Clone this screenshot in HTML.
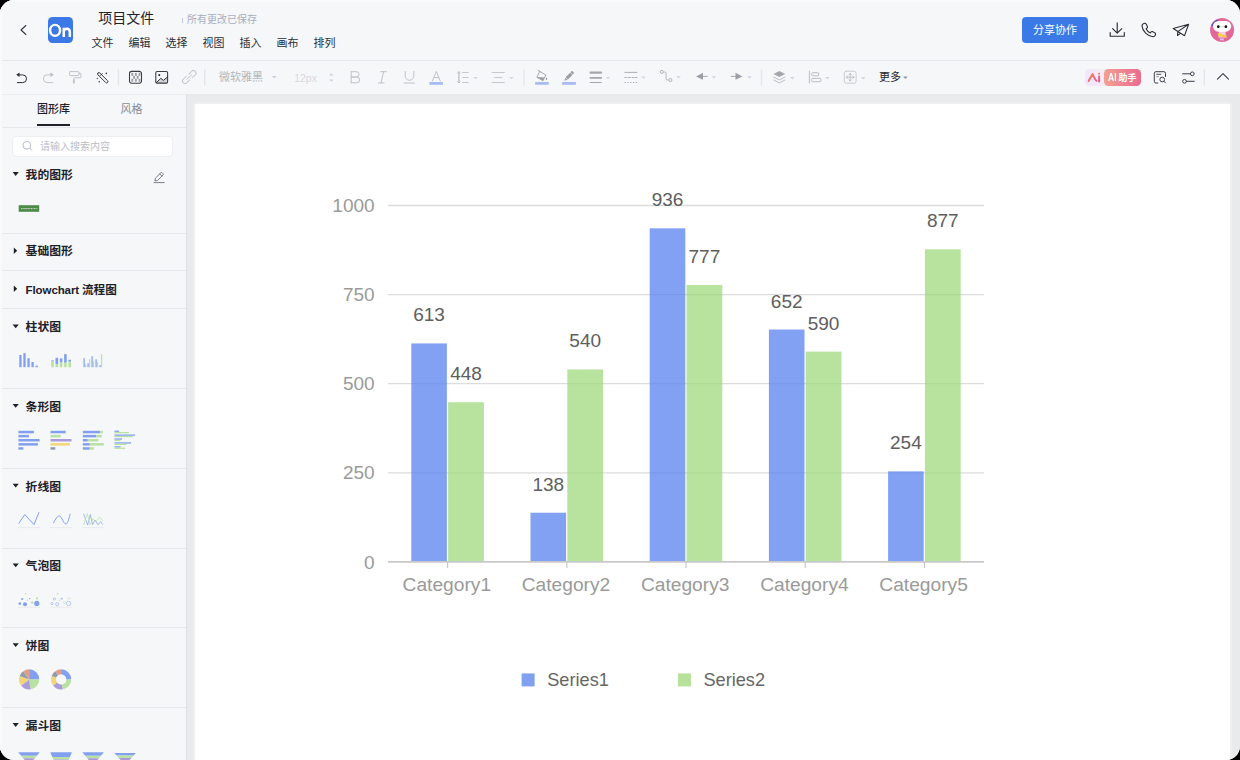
<!DOCTYPE html>
<html lang="zh-CN"><head><meta charset="utf-8"><title>项目文件</title>
<style>
html,body{margin:0;padding:0;background:#000;}
body{width:1240px;height:760px;overflow:hidden;font-family:"Liberation Sans","Noto Sans CJK SC",sans-serif;}
.app{position:relative;width:1240px;height:760px;border-radius:14px;overflow:hidden;background:#f6f7f9;}
.header{position:absolute;left:0;top:0;width:1240px;height:60px;background:#f6f7f9;border-bottom:1px solid #e6e8eb;box-sizing:content-box;}
.toolbar{position:absolute;left:0;top:61px;width:1240px;height:33px;background:#f6f7f9;}
.canvas{position:absolute;left:186px;top:94px;width:1054px;height:666px;background:#e9eaec;}
.page{position:absolute;left:9px;top:10px;width:1035px;height:660px;background:#fff;box-shadow:0 0 3px 1px rgba(255,255,255,0.5);}
.sidebar{position:absolute;left:0;top:94px;width:187px;height:666px;background:#f6f7f9;border-right:1px solid #dedfe2;box-sizing:border-box;}
.ov{position:absolute;left:0;top:0;pointer-events:none;}
.t{position:absolute;white-space:nowrap;line-height:1;font-family:"Liberation Sans","Noto Sans CJK SC",sans-serif;}
.labels .t{z-index:2;}
.sep{position:absolute;left:0;width:186px;height:1px;background:#e6e8eb;}
.logo{position:absolute;left:47.5px;top:17.3px;width:25.2px;height:25.3px;border-radius:4.5px;background:#3a79e6;}
.logo span{color:transparent !important;position:absolute;left:2px;top:4.2px;font-size:18.5px;font-weight:bold;color:#fff;letter-spacing:-1.2px;line-height:1;}
.sharebtn{position:absolute;left:1022.3px;top:17.3px;width:65.4px;height:25.3px;border-radius:4px;background:#3b7ae6;}
.savebar{position:absolute;left:182px;top:17.5px;width:1px;height:5.5px;background:#c3c8d4;}
.aibadge{position:absolute;left:1085px;top:68.8px;width:55.6px;height:17px;border-radius:4.5px;background:linear-gradient(60deg,#efe4fb,#fdf1f3 70%);}
.aibadge-r{position:absolute;left:18.6px;top:0;width:37px;height:17px;border-radius:4.5px;background:linear-gradient(90deg,#f2a08f,#ec6a93);}
.tabline{position:absolute;left:37px;top:30px;width:33px;height:2px;background:#1d2129;}
.search{position:absolute;left:12px;top:42px;width:160.5px;height:20.5px;box-sizing:border-box;border:1px solid #eceef1;border-radius:4px;background:#fff;}
.edgeT{position:absolute;left:0;top:0;width:1240px;height:2px;background:#fafafa;}
.edgeL{position:absolute;left:0;top:0;width:2px;height:760px;background:#fafafa;}

</style></head>
<body>
<div class="app">
  <div class="header"></div>
  <div class="toolbar"></div>
  <div class="canvas"><div class="page"></div></div>
  <div class="sidebar"><div class="sep" style="top:33px"></div><div class="sep" style="top:139px"></div><div class="sep" style="top:176px"></div><div class="sep" style="top:214px"></div><div class="sep" style="top:294px"></div><div class="sep" style="top:374px"></div><div class="sep" style="top:454px"></div><div class="sep" style="top:533px"></div><div class="sep" style="top:613px"></div><div class="sep" style="top:0;background:#ecedf0"></div><div class="tabline"></div><div class="search"></div><div class="t" style="left:25.6px;top:190.9px;font-size:11.5px;font-weight:bold;color:#1d2129;letter-spacing:-0.1px">Flowchart</div></div>
  <div class="labels"><span class="t" style="left:98.3px;top:11.3px;font-size:14.0px;color:#1d2129">项目文件</span><span class="t" style="left:187.0px;top:14.8px;font-size:10.0px;color:#a7aec0">所有更改已保存</span><span class="t" style="left:91.5px;top:37.7px;font-size:11.0px;color:#2a2e36">文件</span><span class="t" style="left:128.5px;top:37.7px;font-size:11.0px;color:#2a2e36">编辑</span><span class="t" style="left:165.5px;top:37.7px;font-size:11.0px;color:#2a2e36">选择</span><span class="t" style="left:202.5px;top:37.7px;font-size:11.0px;color:#2a2e36">视图</span><span class="t" style="left:239.5px;top:37.7px;font-size:11.0px;color:#2a2e36">插入</span><span class="t" style="left:276.5px;top:37.7px;font-size:11.0px;color:#2a2e36">画布</span><span class="t" style="left:313.5px;top:37.7px;font-size:11.0px;color:#2a2e36">排列</span><span class="t" style="left:1033.0px;top:24.8px;font-size:11.0px;color:#ffffff">分享协作</span><span class="t" style="left:219.0px;top:71.5px;font-size:11.0px;color:#b3b7bd">微软雅黑</span><span class="t" style="left:879.0px;top:71.7px;font-size:11.0px;color:#23272e">更多</span><span class="t" style="left:1118.4px;top:73.5px;font-size:9.0px;color:#ffffff;font-weight:bold">助手</span><span class="t" style="left:37.0px;top:103.7px;font-size:11.0px;color:#1d2129;font-weight:500">图形库</span><span class="t" style="left:120.5px;top:103.7px;font-size:11.0px;color:#868c96">风格</span><span class="t" style="left:40.0px;top:141.7px;font-size:10.0px;color:#b9bec8">请输入搜索内容</span><span class="t" style="left:25.6px;top:169.9px;font-size:11.8px;color:#1d2129;font-weight:bold">我的图形</span><span class="t" style="left:25.6px;top:246.2px;font-size:11.8px;color:#1d2129;font-weight:bold">基础图形</span><span class="t" style="left:82.0px;top:284.3px;font-size:11.6px;color:#1d2129;font-weight:bold">流程图</span><span class="t" style="left:25.6px;top:322.2px;font-size:11.8px;color:#1d2129;font-weight:bold">柱状图</span><span class="t" style="left:25.6px;top:401.7px;font-size:11.8px;color:#1d2129;font-weight:bold">条形图</span><span class="t" style="left:25.6px;top:481.5px;font-size:11.8px;color:#1d2129;font-weight:bold">折线图</span><span class="t" style="left:25.6px;top:561.2px;font-size:11.8px;color:#1d2129;font-weight:bold">气泡图</span><span class="t" style="left:25.6px;top:641.0px;font-size:11.8px;color:#1d2129;font-weight:bold">饼图</span><span class="t" style="left:25.6px;top:720.8px;font-size:11.8px;color:#1d2129;font-weight:bold">漏斗图</span></div>
  
<div class="logo"><span>On</span></div>
<div class="sharebtn"></div>
<div class="savebar"></div>

  
<div class="t" style="left:294.2px;top:72.5px;font-size:10.5px;color:#d6d9de;">12px</div>
<div class="aibadge"><div class="aibadge-r"></div></div>
<div class="t" style="left:1107.6px;top:72.9px;font-size:10.4px;font-weight:bold;color:#fff;transform:scaleX(0.82);transform-origin:0 0;">AI</div>

  <svg class="ov" width="1240" height="760" viewBox="0 0 1240 760" font-family="Liberation Sans, sans-serif"><path d="M388 205.50H984" stroke="#dcdcdc" stroke-width="1.3"/><path d="M388 294.60H984" stroke="#dcdcdc" stroke-width="1.3"/><path d="M388 383.70H984" stroke="#dcdcdc" stroke-width="1.3"/><path d="M388 472.80H984" stroke="#dcdcdc" stroke-width="1.3"/><text x="374.6" y="212.10" text-anchor="end" font-size="19.0" fill="#9a9a9a">1000</text><text x="374.6" y="301.20" text-anchor="end" font-size="19.0" fill="#9a9a9a">750</text><text x="374.6" y="390.30" text-anchor="end" font-size="19.0" fill="#9a9a9a">500</text><text x="374.6" y="479.40" text-anchor="end" font-size="19.0" fill="#9a9a9a">250</text><text x="374.6" y="568.50" text-anchor="end" font-size="19.0" fill="#9a9a9a">0</text><path d="M447.60 561.9v6" stroke="#c8c8c8" stroke-width="1.2"/><text x="446.80" y="591.0" text-anchor="middle" font-size="19.2" fill="#9a9a9a">Category1</text><path d="M566.80 561.9v6" stroke="#c8c8c8" stroke-width="1.2"/><text x="566.00" y="591.0" text-anchor="middle" font-size="19.2" fill="#9a9a9a">Category2</text><path d="M686.00 561.9v6" stroke="#c8c8c8" stroke-width="1.2"/><text x="685.20" y="591.0" text-anchor="middle" font-size="19.2" fill="#9a9a9a">Category3</text><path d="M805.20 561.9v6" stroke="#c8c8c8" stroke-width="1.2"/><text x="804.40" y="591.0" text-anchor="middle" font-size="19.2" fill="#9a9a9a">Category4</text><path d="M924.40 561.9v6" stroke="#c8c8c8" stroke-width="1.2"/><text x="923.60" y="591.0" text-anchor="middle" font-size="19.2" fill="#9a9a9a">Category5</text><rect x="411.30" y="343.43" width="35.6" height="218.47" fill="#5b83ee" fill-opacity="0.76"/><rect x="448.10" y="402.23" width="35.8" height="159.67" fill="#9dd878" fill-opacity="0.72"/><rect x="530.50" y="512.72" width="35.6" height="49.18" fill="#5b83ee" fill-opacity="0.76"/><rect x="567.30" y="369.44" width="35.8" height="192.46" fill="#9dd878" fill-opacity="0.72"/><rect x="649.70" y="228.31" width="35.6" height="333.59" fill="#5b83ee" fill-opacity="0.76"/><rect x="686.50" y="284.98" width="35.8" height="276.92" fill="#9dd878" fill-opacity="0.72"/><rect x="768.90" y="329.53" width="35.6" height="232.37" fill="#5b83ee" fill-opacity="0.76"/><rect x="805.70" y="351.62" width="35.8" height="210.28" fill="#9dd878" fill-opacity="0.72"/><rect x="888.10" y="471.37" width="35.6" height="90.53" fill="#5b83ee" fill-opacity="0.76"/><rect x="924.90" y="249.34" width="35.8" height="312.56" fill="#9dd878" fill-opacity="0.72"/><path d="M388 561.9H984" stroke="#c8c8c8" stroke-width="1.6"/><text x="429.10" y="321.43" text-anchor="middle" font-size="19.0" fill="#5e5e5e">613</text><text x="466.00" y="380.23" text-anchor="middle" font-size="19.0" fill="#5e5e5e">448</text><text x="548.30" y="490.72" text-anchor="middle" font-size="19.0" fill="#5e5e5e">138</text><text x="585.20" y="347.44" text-anchor="middle" font-size="19.0" fill="#5e5e5e">540</text><text x="667.50" y="206.31" text-anchor="middle" font-size="19.0" fill="#5e5e5e">936</text><text x="704.40" y="262.98" text-anchor="middle" font-size="19.0" fill="#5e5e5e">777</text><text x="786.70" y="307.53" text-anchor="middle" font-size="19.0" fill="#5e5e5e">652</text><text x="823.60" y="329.62" text-anchor="middle" font-size="19.0" fill="#5e5e5e">590</text><text x="905.90" y="449.37" text-anchor="middle" font-size="19.0" fill="#5e5e5e">254</text><text x="942.80" y="227.34" text-anchor="middle" font-size="19.0" fill="#5e5e5e">877</text><rect x="521.6" y="673.4" width="13" height="13" fill="#81a0f0"/><rect x="678" y="673.4" width="13" height="13" fill="#b8e29c"/><text x="547.2" y="685.9" font-size="18.2" fill="#666">Series1</text><text x="703.4" y="685.9" font-size="18.2" fill="#666">Series2</text></svg>
  <svg class="ov" width="1240" height="760" viewBox="0 0 1240 760">
  <path d="M12.6 172.1h6.2l-3.1 3.9z" fill="#1d2129"/><path d="M13.8 247.4v6.6l3.4-3.3z" fill="#1d2129"/><path d="M13.8 285.4v6.6l3.4-3.3z" fill="#1d2129"/><path d="M12.6 324.4h6.2l-3.1 3.9z" fill="#1d2129"/><path d="M12.6 403.9h6.2l-3.1 3.9z" fill="#1d2129"/><path d="M12.6 483.7h6.2l-3.1 3.9z" fill="#1d2129"/><path d="M12.6 563.4h6.2l-3.1 3.9z" fill="#1d2129"/><path d="M12.6 643.1999999999999h6.2l-3.1 3.9z" fill="#1d2129"/><path d="M12.6 723.0h6.2l-3.1 3.9z" fill="#1d2129"/><rect x="18.70" y="205.20" width="20.50" height="6.60" fill="#4f8a4a"/><path d="M21 208.6H37.3" stroke="#dcead9" stroke-width="0.85" stroke-dasharray="1.5 0.4 0.9 0.4"/><rect x="19.30" y="355.00" width="2.30" height="12.20" fill="#83a0f0"/><rect x="23.35" y="353.20" width="2.30" height="14.00" fill="#83a0f0"/><rect x="27.40" y="358.20" width="2.30" height="9.00" fill="#83a0f0"/><rect x="31.45" y="362.00" width="2.30" height="5.20" fill="#83a0f0"/><rect x="35.50" y="365.60" width="2.30" height="1.60" fill="#83a0f0"/><rect x="51.20" y="361.20" width="2.60" height="6.00" fill="#b9e1a3"/><rect x="51.20" y="360.40" width="2.60" height="0.80" fill="#83a0f0"/><rect x="55.50" y="364.00" width="2.60" height="3.20" fill="#b9e1a3"/><rect x="55.50" y="357.80" width="2.60" height="6.20" fill="#83a0f0"/><rect x="59.80" y="362.20" width="2.60" height="5.00" fill="#b9e1a3"/><rect x="59.80" y="358.40" width="2.60" height="3.80" fill="#83a0f0"/><rect x="64.10" y="362.60" width="2.60" height="4.60" fill="#b9e1a3"/><rect x="64.10" y="354.20" width="2.60" height="8.40" fill="#83a0f0"/><rect x="68.40" y="361.60" width="2.60" height="5.60" fill="#b9e1a3"/><rect x="68.40" y="359.80" width="2.60" height="1.80" fill="#83a0f0"/><rect x="83.50" y="358.20" width="1.20" height="9.00" fill="#83a0f0"/><rect x="85.00" y="364.20" width="1.20" height="3.00" fill="#b9e1a3"/><rect x="87.50" y="363.20" width="1.20" height="4.00" fill="#83a0f0"/><rect x="89.00" y="359.20" width="1.20" height="8.00" fill="#b9e1a3"/><rect x="91.50" y="356.20" width="1.20" height="11.00" fill="#83a0f0"/><rect x="93.00" y="361.20" width="1.20" height="6.00" fill="#b9e1a3"/><rect x="95.50" y="359.20" width="1.20" height="8.00" fill="#83a0f0"/><rect x="97.00" y="362.20" width="1.20" height="5.00" fill="#b9e1a3"/><rect x="99.50" y="365.20" width="1.20" height="2.00" fill="#83a0f0"/><rect x="101.00" y="354.20" width="1.20" height="13.00" fill="#b9e1a3"/><rect x="18.40" y="430.80" width="15.50" height="2.50" fill="#83a0f0"/><rect x="18.40" y="434.90" width="10.50" height="2.50" fill="#83a0f0"/><rect x="18.40" y="439.00" width="21.20" height="2.50" fill="#83a0f0"/><rect x="18.40" y="443.10" width="19.50" height="2.50" fill="#83a0f0"/><rect x="18.40" y="447.20" width="5.00" height="2.50" fill="#83a0f0"/><rect x="50.50" y="430.80" width="15.20" height="2.50" fill="#83a0f0"/><rect x="50.50" y="434.90" width="10.20" height="2.50" fill="#b9e1a3"/><rect x="50.50" y="439.00" width="21.00" height="2.50" fill="#ab9bd9"/><rect x="50.50" y="443.10" width="19.50" height="2.50" fill="#f2d678"/><rect x="50.50" y="447.20" width="4.80" height="2.50" fill="#929bb0"/><rect x="82.80" y="430.80" width="17.50" height="2.50" fill="#83a0f0"/><rect x="100.30" y="430.80" width="2.50" height="2.50" fill="#b9e1a3"/><rect x="82.80" y="434.90" width="13.50" height="2.50" fill="#83a0f0"/><rect x="96.30" y="434.90" width="5.50" height="2.50" fill="#b9e1a3"/><rect x="82.80" y="439.00" width="5.00" height="2.50" fill="#83a0f0"/><rect x="87.80" y="439.00" width="10.50" height="2.50" fill="#b9e1a3"/><rect x="82.80" y="443.10" width="7.00" height="2.50" fill="#83a0f0"/><rect x="89.80" y="443.10" width="14.00" height="2.50" fill="#b9e1a3"/><rect x="82.80" y="447.20" width="7.00" height="2.50" fill="#83a0f0"/><rect x="89.80" y="447.20" width="4.20" height="2.50" fill="#b9e1a3"/><rect x="114.50" y="430.60" width="4.50" height="1.30" fill="#83a0f0"/><rect x="114.50" y="432.00" width="14.50" height="1.30" fill="#b9e1a3"/><rect x="114.50" y="434.50" width="20.50" height="1.30" fill="#83a0f0"/><rect x="114.50" y="435.90" width="18.00" height="1.30" fill="#b9e1a3"/><rect x="114.50" y="438.40" width="7.50" height="1.30" fill="#83a0f0"/><rect x="114.50" y="439.80" width="6.00" height="1.30" fill="#b9e1a3"/><rect x="114.50" y="442.30" width="16.50" height="1.30" fill="#83a0f0"/><rect x="114.50" y="443.70" width="12.00" height="1.30" fill="#b9e1a3"/><rect x="114.50" y="446.20" width="6.00" height="1.30" fill="#83a0f0"/><rect x="114.50" y="447.60" width="10.50" height="1.30" fill="#b9e1a3"/><path d="M18 527.6h22" stroke="#e4e6ea" stroke-width="0.8" fill="none"/><path d="M50.3 527.6h22" stroke="#e4e6ea" stroke-width="0.8" fill="none"/><path d="M82.5 527.6h22" stroke="#e4e6ea" stroke-width="0.8" fill="none"/><path d="M18.6 523.6L24.8 514.6L34 524.6L39 512.2" stroke="#83a0f0" stroke-width="1" fill="none"/><path d="M53.4 523.2C55.5 519 57.5 515.6 59.5 516C62 516.5 63.5 524.3 66 524C68 523.5 69.3 517 70.2 513.8" stroke="#83a0f0" stroke-width="1" fill="none"/><path d="M83.6 513.8L87.6 525L90.3 514.6L92.6 524.6L95 520L98 524.8L100.5 521.6L102.8 524.6" stroke="#83a0f0" stroke-width="0.7" fill="none"/><path d="M83.6 525L87.3 513.6L90 524.8L93 518.6L96 522L99.5 517.2L102.8 521" stroke="#b9e1a3" stroke-width="0.7" fill="none"/><path d="M18 607.2h22" stroke="#e4e6ea" stroke-width="0.8" fill="none"/><path d="M50.3 607.2h22" stroke="#e4e6ea" stroke-width="0.8" fill="none"/><circle cx="25.5" cy="593.8" r="0.8" fill="#b9e1a3"/><circle cx="22.2" cy="599" r="1.1" fill="#83a0f0"/><circle cx="29.6" cy="598.6" r="0.7" fill="#83a0f0"/><circle cx="27.4" cy="600.2" r="0.6" fill="#b9e1a3"/><circle cx="19.8" cy="603.6" r="1.3" fill="#83a0f0"/><circle cx="25" cy="604.2" r="2" fill="#83a0f0"/><circle cx="32.2" cy="602.6" r="1.2" fill="#b9e1a3"/><circle cx="37" cy="598.4" r="1.1" fill="#b9e1a3"/><circle cx="36.8" cy="603.4" r="2.6" fill="#83a0f0"/><circle cx="57.6" cy="593.8" r="0.8" fill="none" stroke="#b9e1a3" stroke-width="0.6" opacity="0.85"/><circle cx="54.4" cy="599" r="1.1" fill="none" stroke="#83a0f0" stroke-width="0.6" opacity="0.85"/><circle cx="61.8" cy="598.6" r="0.7" fill="none" stroke="#83a0f0" stroke-width="0.6" opacity="0.85"/><circle cx="59.6" cy="600.2" r="0.6" fill="none" stroke="#b9e1a3" stroke-width="0.6" opacity="0.85"/><circle cx="52" cy="603.6" r="1.1" fill="none" stroke="#83a0f0" stroke-width="0.6" opacity="0.85"/><circle cx="57.2" cy="604.2" r="1.6" fill="none" stroke="#83a0f0" stroke-width="0.6" opacity="0.85"/><circle cx="64.4" cy="602.6" r="1.0" fill="none" stroke="#b9e1a3" stroke-width="0.6" opacity="0.85"/><circle cx="69" cy="598.4" r="0.9" fill="none" stroke="#b9e1a3" stroke-width="0.6" opacity="0.85"/><circle cx="68.6" cy="603.4" r="2.2" fill="none" stroke="#83a0f0" stroke-width="0.6" opacity="0.85"/><path d="M29.1 679.4L29.10 669.30A10.1 10.1 0 0 1 39.20 679.40Z" fill="#83a0f0"/><path d="M61.10 674.20L61.10 669.30A10.1 10.1 0 0 1 71.20 679.40L66.30 679.40A5.2 5.2 0 0 0 61.10 674.20Z" fill="#83a0f0"/><path d="M29.1 679.4L39.20 679.40A10.1 10.1 0 0 1 30.51 689.40Z" fill="#b9e1a3"/><path d="M66.30 679.40L71.20 679.40A10.1 10.1 0 0 1 62.51 689.40L61.82 684.55A5.2 5.2 0 0 0 66.30 679.40Z" fill="#b9e1a3"/><path d="M29.1 679.4L30.51 689.40A10.1 10.1 0 0 1 21.14 685.62Z" fill="#ab9bd9"/><path d="M61.82 684.55L62.51 689.40A10.1 10.1 0 0 1 53.14 685.62L57.00 682.60A5.2 5.2 0 0 0 61.82 684.55Z" fill="#ab9bd9"/><path d="M29.1 679.4L21.14 685.62A10.1 10.1 0 0 1 19.61 675.95Z" fill="#f2d678"/><path d="M57.00 682.60L53.14 685.62A10.1 10.1 0 0 1 51.61 675.95L56.21 677.62A5.2 5.2 0 0 0 57.00 682.60Z" fill="#f2d678"/><path d="M29.1 679.4L19.61 675.95A10.1 10.1 0 0 1 23.16 671.23Z" fill="#929bb0"/><path d="M56.21 677.62L51.61 675.95A10.1 10.1 0 0 1 55.16 671.23L58.04 675.19A5.2 5.2 0 0 0 56.21 677.62Z" fill="#929bb0"/><path d="M29.1 679.4L23.16 671.23A10.1 10.1 0 0 1 29.10 669.30Z" fill="#e39c86"/><path d="M58.04 675.19L55.16 671.23A10.1 10.1 0 0 1 61.10 669.30L61.10 674.20A5.2 5.2 0 0 0 58.04 675.19Z" fill="#e39c86"/><path d="M18.20 752.2L39.80 752.2L36.81 755.8L21.19 755.8Z" fill="#83a0f0"/><path d="M21.19 755.8L36.81 755.8L34.82 758.2L23.18 758.2Z" fill="#b9e1a3"/><path d="M23.18 758.2L34.82 758.2L32.49 761L25.51 761Z" fill="#ab9bd9"/><path d="M50.30 752.2L71.90 752.2L69.91 757L52.29 757Z" fill="#83a0f0"/><path d="M52.29 757L69.91 757L68.91 759.4L53.29 759.4Z" fill="#b9e1a3"/><path d="M53.29 759.4L68.91 759.4L68.24 761L53.96 761Z" fill="#ab9bd9"/><path d="M82.30 752.2L103.90 752.2L100.91 755.8L85.29 755.8Z" fill="#83a0f0"/><path d="M85.29 755.8L100.91 755.8L98.92 758.2L87.28 758.2Z" fill="#b9e1a3"/><path d="M87.28 758.2L98.92 758.2L96.59 761L89.61 761Z" fill="#ab9bd9"/><path d="M114.30 753L135.90 753L133.56 755.6L116.64 755.6Z" fill="#83a0f0"/><path d="M116.64 755.6L133.56 755.6L131.40 758L118.80 758Z" fill="#b9e1a3"/><path d="M118.80 758L131.40 758L128.70 761L121.50 761Z" fill="#ab9bd9"/>
  <path d="M25.9 25.5L21 30L25.9 34.5" stroke="#30343b" stroke-width="1.05" fill="none" stroke-linecap="round" stroke-linejoin="round" /><ellipse cx="55.05" cy="30.35" rx="5" ry="5.5" fill="none" stroke="#fff" stroke-width="2.45"/><path d="M63.75 37V27.8M63.75 32c0-2.4 1.4-3.2 3-3.2s3.1 0.8 3.1 3.3V37" fill="none" stroke="#fff" stroke-width="2.5"/><path d="M1117.2 22.9V32.8M1112.6 28.6L1117.2 33.2L1121.8 28.6M1110.2 32.6V36.2H1124.3V32.6" stroke="#2b2f36" stroke-width="1.15" fill="none" stroke-linecap="round" stroke-linejoin="round" /><path d="M1144.6 23.3c-1.2 0.3-2.6 1.3-2.6 2.6c0.2 2.6 1.6 5.2 3.6 7.2s4.8 3.4 7.4 3.6c1.3 0 2.3-1.4 2.6-2.6c0.1-0.5-0.1-0.9-0.6-1.2l-2.6-1.3c-0.5-0.2-1-0.1-1.3 0.3l-0.8 1c-1.8-0.8-3.4-2.4-4.2-4.2l1-0.8c0.4-0.3 0.5-0.8 0.3-1.3l-1.3-2.6c-0.3-0.5-0.9-0.8-1.5-0.7z" stroke="#2b2f36" stroke-width="1.1" fill="none" stroke-linecap="round" stroke-linejoin="round" /><path d="M1188.6 24.2L1173.2 28.5L1184.5 35.7zM1177.8 31.6L1188.6 24.2M1177.8 31.6L1177.5 35.5L1180.4 33.4" stroke="#2b2f36" stroke-width="1.05" fill="none" stroke-linecap="round" stroke-linejoin="round" /><path d="M16.2 74.8L19.5 72.5V77.1z" fill="#2b2f36" /><path d="M19.2 74.9H22.7a3.85 3.85 0 0 1 0 7.7H17.3" stroke="#2b2f36" stroke-width="1.0" fill="none" stroke-linecap="round" stroke-linejoin="round" /><path d="M53.8 74.8L50.4 72.3V77.3z" fill="#bfc2c8" /><path d="M50.8 74.8H47.3a3.9 3.9 0 0 0 0 7.8H52.8" stroke="#bfc2c8" stroke-width="1.0" fill="none" stroke-linecap="round" stroke-linejoin="round" /><path d="M70.3 71.6h7.8a0.8 0.8 0 0 1 0.8 0.8v2.4a0.8 0.8 0 0 1-0.8 0.8h-7.8a0.8 0.8 0 0 1-0.8-0.8v-2.4a0.8 0.8 0 0 1 0.8-0.8zM78.9 73.3h1.2a0.8 0.8 0 0 1 0.8 0.8v2.9a0.8 0.8 0 0 1-0.8 0.8h-5.5a0.8 0.8 0 0 0-0.8 0.8v1" stroke="#bfc2c8" stroke-width="1.0" fill="none" stroke-linecap="round" stroke-linejoin="round" /><path d="M72.9 79.4h1.9v4.2h-1.9z" fill="#bfc2c8" /><path d="M98 73a1.3 1.3 0 0 1 1.85 0l7.7 7.7a1.3 1.3 0 0 1 0 1.85a1.3 1.3 0 0 1-1.85 0l-7.7-7.7a1.3 1.3 0 0 1 0-1.85zM100.4 75.4l1.8-1.8" stroke="#2b2f36" stroke-width="0.95" fill="none" stroke-linecap="round" stroke-linejoin="round" /><path d="M106.3 72.2l0.85 1.1l-0.85 1.1l-0.85-1.1zM97.2 77.5l0.7 0.9l-0.7 0.9l-0.7-0.9zM99.2 80.7l0.8 1l-0.8 1l-0.8-1z" fill="#2b2f36" /><rect x="117.7" y="69.2" width="1.4" height="16.3" fill="#e4e6e9"/><rect x="204.0" y="69.2" width="1.4" height="16.3" fill="#e4e6e9"/><rect x="523.1999999999999" y="69.2" width="1.4" height="16.3" fill="#e4e6e9"/><rect x="760.8" y="69.2" width="1.4" height="16.3" fill="#e4e6e9"/><rect x="1203.6" y="69.2" width="1.4" height="16.3" fill="#e4e6e9"/><path d="M131.6 71.4h7.8a2.1 2.1 0 0 1 2.1 2.1v7.6a2.1 2.1 0 0 1-2.1 2.1h-7.8a2.1 2.1 0 0 1-2.1-2.1v-7.6a2.1 2.1 0 0 1 2.1-2.1z" stroke="#3a3e46" stroke-width="1.1" fill="none" stroke-linecap="round" stroke-linejoin="round" /><rect x="131.40" y="72.90" width="1.8" height="2.95" fill="#9a9da3"/><rect x="135.00" y="72.90" width="1.8" height="2.95" fill="#9a9da3"/><rect x="138.60" y="72.90" width="1.8" height="2.95" fill="#9a9da3"/><rect x="133.20" y="75.85" width="1.8" height="2.95" fill="#9a9da3"/><rect x="136.80" y="75.85" width="1.8" height="2.95" fill="#9a9da3"/><rect x="131.40" y="78.80" width="1.8" height="2.95" fill="#9a9da3"/><rect x="135.00" y="78.80" width="1.8" height="2.95" fill="#9a9da3"/><rect x="138.60" y="78.80" width="1.8" height="2.95" fill="#9a9da3"/><path d="M156.3 82.7l4.5-4.4l2.5 2.1l4.3-3.4v5a1.2 1.2 0 0 1-1.2 1.2h-9a1.2 1.2 0 0 1-1.1-0.5z" fill="#d3d5d9" /><path d="M157 71.5h9.4a1.2 1.2 0 0 1 1.2 1.2v9.2a1.2 1.2 0 0 1-1.2 1.2h-9.4a1.2 1.2 0 0 1-1.2-1.2v-9.2a1.2 1.2 0 0 1 1.2-1.2z" stroke="#3a3e46" stroke-width="1.1" fill="none" stroke-linecap="round" stroke-linejoin="round" /><path d="M156.5 82.6l4.3-4.3l2.5 2.1l4.2-3.3" stroke="#2b2f36" stroke-width="1.0" fill="none" stroke-linecap="round" stroke-linejoin="round" /><circle cx="159.3" cy="75.1" r="1.05" fill="#2b2f36"/><g transform="translate(189.2 77) rotate(-43)" stroke="#c6c9cf" stroke-width="1" fill="none" stroke-linecap="round"><path d="M-1.7 -2.5H-5.8a2.5 2.5 0 0 0 0 5H-1.7M1.7 -2.5H5.8a2.5 2.5 0 0 1 0 5H1.7M-3.3 0H3.3"/></g><path d="M271.8 76.0h4.8l-2.4 2.5z" fill="#c9cfdc" /><path d="M329 75.6h4.6l-2.3-2.4z" fill="#ced3dd" /><path d="M329 79.4h4.6l-2.3 2.4z" fill="#ced3dd" /><path d="M351.2 71.7V82.8M351.2 71.7H356.4a2.65 2.65 0 0 1 0 5.3H351.2M351.2 77H356.8a2.9 2.9 0 0 1 0 5.8H351.2" stroke="#bfc2c8" stroke-width="1.0" fill="none" stroke-linecap="round" stroke-linejoin="round" /><path d="M380.6 71.7H386.4M378.2 82.9H384M383.6 71.7L381 82.9" stroke="#bfc2c8" stroke-width="1.0" fill="none" stroke-linecap="round" stroke-linejoin="round" /><path d="M405.2 71.4V76a4.3 4.3 0 0 0 8.6 0V71.4" stroke="#bfc2c8" stroke-width="1.0" fill="none" stroke-linecap="round" stroke-linejoin="round" /><path d="M404.2 83H414.6" stroke="#bfc2c8" stroke-width="1.0" fill="none" stroke-linecap="round" stroke-linejoin="round" /><path d="M432.4 80.8L436.3 71.5L440.2 80.8M433.8 77.6H438.8" stroke="#bfc2c8" stroke-width="1.0" fill="none" stroke-linecap="round" stroke-linejoin="round" /><rect x="429.4" y="82" width="13.5" height="2.8" fill="#a8bcf3"/><path d="M458.9 72V82.6" stroke="#bfc2c8" stroke-width="1.4" fill="none" stroke-linecap="round" stroke-linejoin="round" /><path d="M457.4 73.2L458.9 71.6L460.4 73.2M457.4 81.4L458.9 83L460.4 81.4" stroke="#bfc2c8" stroke-width="0.9" fill="none" stroke-linecap="round" stroke-linejoin="round" /><path d="M462.6 72.5H468.2M462.6 77.5H468.2M462.6 82.5H468.2" stroke="#bfc2c8" stroke-width="0.9" fill="none" stroke-linecap="round" stroke-linejoin="round" /><path d="M473.2 76.9h4.6l-2.3 2.4z" fill="#d0d6e2" /><path d="M492.2 72.5H504.4M494.6 77.5H502M492.2 82.5H504.4" stroke="#bfc2c8" stroke-width="0.9" fill="none" stroke-linecap="round" stroke-linejoin="round" /><path d="M509.2 76.9h4.6l-2.3 2.4z" fill="#d0d6e2" /><path d="M538.2 70.4L545.8 75L543 80.7L536.9 77.3L539.6 71.4" stroke="#9b9ea4" stroke-width="0.9" fill="none" stroke-linecap="round" stroke-linejoin="round" /><path d="M537.2 77.1L544.6 77.4L543 80.7L536.9 77.3z" fill="#9b9ea4" /><path d="M546.5 77.5c0.5 0.9 0.75 1.3 0.75 1.8a0.75 0.75 0 0 1-1.5 0c0-0.5 0.25-0.9 0.75-1.8z" fill="#9b9ea4" /><rect x="535.1" y="82" width="13.7" height="2.8" fill="#a8bcf3"/><g transform="translate(564.5 80.7) rotate(-45.5)" fill="#9b9ea4"><path d="M0 0L2.7 -1.55V1.55z"/><rect x="3.1" y="-1.6" width="6.6" height="3.2"/><rect x="10.1" y="-1.6" width="2.2" height="3.2" rx="0.4"/></g><rect x="562.1" y="82" width="13.8" height="2.8" fill="#a8bcf3"/><rect x="589.6" y="71.6" width="12.3" height="2.2" rx="0.5" fill="#a3a6ab"/><rect x="589.6" y="77" width="12.3" height="1.8" rx="0.5" fill="#a3a6ab"/><rect x="589.6" y="82.1" width="12.3" height="0.9" rx="0.4" fill="#a3a6ab"/><path d="M605.8 76.9h4.6l-2.3 2.4z" fill="#d0d6e2" /><path d="M624.9 72.4H637" stroke="#a3a6ab" stroke-width="0.9" fill="none" stroke-linecap="round" stroke-linejoin="round" /><path d="M624.9 77.5H637" stroke="#a3a6ab" stroke-width="0.9" fill="none" stroke-linecap="round" stroke-linejoin="round" stroke-dasharray="1.4 1.6 2.6 1.6"/><path d="M624.9 82.5H637" stroke="#a3a6ab" stroke-width="0.9" fill="none" stroke-linecap="round" stroke-linejoin="round" stroke-dasharray="0.6 2.2"/><path d="M641.1 76.6h4.6l-2.3 2.4z" fill="#d0d6e2" /><circle cx="661.9" cy="71.9" r="1.55" fill="none" stroke="#a6a9ae" stroke-width="0.9"/><circle cx="670.4" cy="80" r="1.55" fill="none" stroke="#a6a9ae" stroke-width="0.9"/><path d="M663.5 72h1.2a1.4 1.4 0 0 1 1.4 1.4v5.2a1.4 1.4 0 0 0 1.4 1.4h1.3" stroke="#c0c3c8" stroke-width="1.2" fill="none" stroke-linecap="round" stroke-linejoin="round" /><path d="M676.2 76.2h4.6l-2.3 2.4z" fill="#d0d6e2" /><path d="M696.1 76.4L703 72.8V79.8z" fill="#9b9ea4" /><path d="M703 76.4H707.2" stroke="#9b9ea4" stroke-width="0.9" fill="none" stroke-linecap="round" stroke-linejoin="round" /><path d="M711.6 76.2h4.6l-2.3 2.4z" fill="#d0d6e2" /><path d="M742.4 76.4L735.5 72.8V79.8z" fill="#9b9ea4" /><path d="M731.2 76.4H735.5" stroke="#9b9ea4" stroke-width="0.9" fill="none" stroke-linecap="round" stroke-linejoin="round" /><path d="M747.1 76.3h4.6l-2.3 2.4z" fill="#d0d6e2" /><path d="M779.3 71L785.2 74L779.3 77L773.5 74z" fill="#a3a6ab" /><path d="M773.8 77.1L779.3 79.9L784.9 77.1M773.8 80.1L779.3 82.9L784.9 80.1" stroke="#b4b7bc" stroke-width="0.9" fill="none" stroke-linecap="round" stroke-linejoin="round" /><path d="M790 77.1h4.6l-2.3 2.4z" fill="#d0d6e2" /><path d="M809.4 71.2V83" stroke="#b3b6bb" stroke-width="0.9" fill="none" stroke-linecap="round" stroke-linejoin="round" /><rect x="811.7" y="72.7" width="7" height="3.1" rx="0.9" fill="none" stroke="#b3b6bb" stroke-width="0.9"/><rect x="811.7" y="78.4" width="9.2" height="3.3" rx="0.9" fill="none" stroke="#b3b6bb" stroke-width="0.9"/><path d="M825 77.1h4.6l-2.3 2.4z" fill="#d0d6e2" /><path d="M846.4 71.2h7.6a2.1 2.1 0 0 1 2.1 2.1v7.8a2.1 2.1 0 0 1-2.1 2.1h-7.6a2.1 2.1 0 0 1-2.1-2.1v-7.8a2.1 2.1 0 0 1 2.1-2.1z" stroke="#c9ccd1" stroke-width="1.0" fill="none" stroke-linecap="round" stroke-linejoin="round" /><path d="M850.2 73.4V81M846.4 77.2H854M849 74.6L850.2 73.3L851.4 74.6M849 79.8L850.2 81.1L851.4 79.8M847.6 76L846.3 77.2L847.6 78.4M852.8 76L854.1 77.2L852.8 78.4" stroke="#b3b6bb" stroke-width="0.8" fill="none" stroke-linecap="round" stroke-linejoin="round" /><path d="M860.9 77.1h4.6l-2.3 2.4z" fill="#d0d6e2" /><path d="M903 76.6h4.8l-2.4 2.5z" fill="#8c98b6" /><path d="M1157.8 83h-1.9a1.6 1.6 0 0 1-1.6-1.6v-8.1a1.6 1.6 0 0 1 1.6-1.6h8a1.6 1.6 0 0 1 1.6 1.6v3.2" stroke="#3a3e46" stroke-width="1.0" fill="none" stroke-linecap="round" stroke-linejoin="round" /><path d="M1156.6 74.3h4.2" stroke="#3a3e46" stroke-width="0.9" fill="none" stroke-linecap="round" stroke-linejoin="round" /><path d="M1156.6 76.7h1.9" stroke="#8a8e96" stroke-width="0.9" fill="none" stroke-linecap="round" stroke-linejoin="round" /><circle cx="1162.2" cy="79.5" r="2.35" fill="none" stroke="#3a3e46" stroke-width="1"/><path d="M1164 81.4L1165.5 82.9" stroke="#3a3e46" stroke-width="1.0" fill="none" stroke-linecap="round" stroke-linejoin="round" /><path d="M1182.6 73.8H1190.3M1186.6 81.3H1194.3" stroke="#3a3e46" stroke-width="1.0" fill="none" stroke-linecap="round" stroke-linejoin="round" /><circle cx="1192.3" cy="73.8" r="1.85" fill="none" stroke="#3a3e46" stroke-width="1"/><circle cx="1184.5" cy="81.3" r="1.85" fill="none" stroke="#3a3e46" stroke-width="1"/><path d="M1217.4 79.2L1223 73.7L1228.5 79.2" stroke="#3a3e46" stroke-width="1.1" fill="none" stroke-linecap="round" stroke-linejoin="round" /><circle cx="26.9" cy="145.3" r="3.9" fill="none" stroke="#b3bccd" stroke-width="1"/><path d="M29.8 148.3L31.6 150.2" stroke="#b3bccd" stroke-width="1.0" fill="none" stroke-linecap="round" stroke-linejoin="round" /><path d="M154.9 180.4l0.5-2.2l5.4-5.4a1 1 0 0 1 1.4 0l0.8 0.8a1 1 0 0 1 0 1.4l-5.4 5.4zM159.7 173.9l2.2 2.2" stroke="#5a606b" stroke-width="0.8" fill="none" stroke-linecap="round" stroke-linejoin="round" /><path d="M154 182.6H164.2" stroke="#5a606b" stroke-width="0.8" fill="none" stroke-linecap="round" stroke-linejoin="round" /><defs><linearGradient id="aig" gradientUnits="userSpaceOnUse" x1="1090" y1="73" x2="1098" y2="82"><stop offset="0" stop-color="#f47a55"/><stop offset="1" stop-color="#e8568c"/></linearGradient></defs><path d="M1088.6 81L1092.5 74.1L1095.2 79.4L1096.5 80.8" stroke="url(#aig)" stroke-width="1.9" fill="none" stroke-linecap="round" stroke-linejoin="round" stroke-linejoin="miter"/><path d="M1099.1 76.4V81.5" stroke="url(#aig)" stroke-width="1.9" fill="none" stroke-linecap="round" stroke-linejoin="round" stroke-linecap="butt"/><circle cx="1099.1" cy="73.8" r="0.95" fill="#f0705f"/><defs><filter id="bl" filterUnits="userSpaceOnUse" x="1205" y="14" width="34" height="32"><feGaussianBlur stdDeviation="0.75"/></filter><filter id="bl2" filterUnits="userSpaceOnUse" x="1205" y="14" width="34" height="32"><feGaussianBlur stdDeviation="0.35"/></filter><clipPath id="avc"><circle cx="1222.06" cy="30" r="12"/></clipPath></defs><circle cx="1222.06" cy="30" r="12.7" fill="#fbfbfc"/><circle cx="1222.06" cy="30" r="12" fill="#e3679a"/><g clip-path="url(#avc)"><path d="M1212.6 25.2A10.2 10.2 0 0 1 1217.2 20.9" stroke="#6a40d2" stroke-width="2.3" fill="none" stroke-linecap="round" filter="url(#bl2)"/><path d="M1219 31h6.4l0.6 6.4h-7.6z" fill="#f8e2ee" opacity="0.85" filter="url(#bl)"/><rect x="1212.9" y="20.9" width="18.3" height="10.8" rx="5.4" fill="#fff" filter="url(#bl)"/><path d="M1218.3 26.7H1225.9" stroke="#aaa" stroke-width="0.45"/><circle cx="1218.3" cy="26.7" r="1.35" fill="#111" filter="url(#bl2)"/><circle cx="1225.9" cy="26.7" r="1.35" fill="#111" filter="url(#bl2)"/><path d="M1217.9 33.3l1.2-0.1l7.9 2.7l-0.5 1.9l-7.6-1.7l-1-0.8z" fill="#f7d03a" filter="url(#bl2)"/><path d="M1219.8 38.3l4.2 0.3l-0.4 2l-3.4-0.4z" fill="#dcc0f2" filter="url(#bl2)"/></g>
  </svg>
  <div class="edgeT"></div><div class="edgeL"></div>
</div>
</body></html>
